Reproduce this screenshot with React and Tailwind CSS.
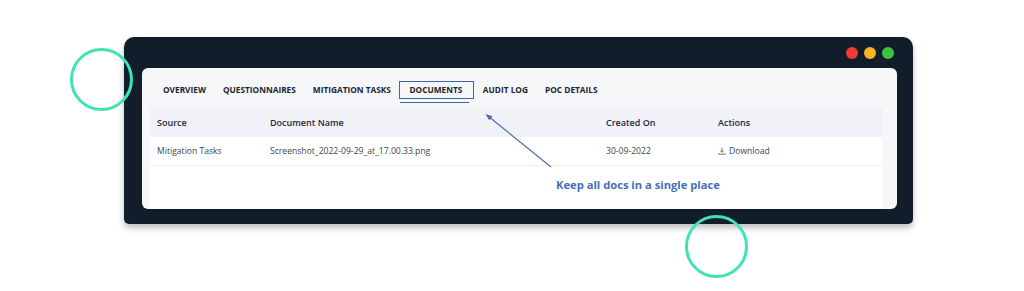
import React from "react";

const tabs = ["OVERVIEW", "QUESTIONNAIRES", "MITIGATION TASKS", "DOCUMENTS", "AUDIT LOG", "POC DETAILS"];

export default function App() {
  return (
    <div className="relative w-[1024px] h-[291px] bg-white overflow-hidden" style={{ fontFamily: "'Open Sans', 'Noto Sans', sans-serif" }}>
      <div className="pt-[37px] pl-[124px]">
        <div className="w-[789px] h-[187px] bg-[#121d2b] rounded-t-[10px] rounded-b-[5px] shadow-[0_4px_6px_rgba(0,0,0,0.25)] flex flex-col">
          <div className="h-[31px] flex items-center justify-end pr-[19px] gap-[6px] pt-[1px]">
            <span className="w-[12px] h-[12px] rounded-full bg-[#ee3b36]" />
            <span className="w-[12px] h-[12px] rounded-full bg-[#f5b521]" />
            <span className="w-[12px] h-[12px] rounded-full bg-[#3cc43f]" />
          </div>
          <div className="ml-[18px] w-[755px] h-[141px] bg-[#f6f7f9] rounded-[6px] flex flex-col">
            <div className="flex pl-[12.5px] pt-[13px]">
              {tabs.map((t) => (
                <div key={t} className="flex flex-col items-stretch">
                  <div
                    className={
                      "h-[18px] flex items-center text-[8.3px] font-bold text-[#1b2433] " +
                      (t === "DOCUMENTS" ? "border-[1.5px] border-[#3f64a8] pl-[9px] pr-[11px]" : "px-[8.5px]")
                    }
                  >
                    {t}
                  </div>
                  <div className={"h-[1px] mt-[3px] ml-[1px] mr-[5px] " + (t === "DOCUMENTS" ? "bg-[#3f64a8]" : "")} />
                </div>
              ))}
            </div>
            <div className="ml-[8px] mt-[5px] w-[733px] flex-1 bg-white flex flex-col rounded-br-[4px]">
              <div className="h-[29px] bg-[#f0f2f7] flex items-center text-[9px] font-semibold text-[#1f2937]">
                <div className="w-[120px] pl-[7px]">Source</div>
                <div className="w-[336px]">Document Name</div>
                <div className="w-[112px]">Created On</div>
                <div>Actions</div>
              </div>
              <div className="h-[29px] border-b border-[#eef0f4] flex items-center text-[8.6px] text-[#3d4553]">
                <div className="w-[120px] pl-[7px]">Mitigation Tasks</div>
                <div className="w-[336px]">Screenshot_2022-09-29_at_17.00.33.png</div>
                <div className="w-[112px]">30-09-2022</div>
                <div className="flex items-center gap-[3px]">
                  <svg width="8" height="8" viewBox="0 0 10 10" fill="none" stroke="#555" strokeWidth="1">
                    <path d="M5 1v5.5M2.8 4.5L5 6.7l2.2-2.2M1 7.5v1.5h8V7.5" />
                  </svg>
                  <span>Download</span>
                </div>
              </div>
            </div>
          </div>
        </div>
      </div>

      <svg className="absolute left-[480px] top-[110px]" width="80" height="64" viewBox="0 0 80 64" fill="none">
        <line x1="71" y1="57" x2="8" y2="6" stroke="#4a6db0" strokeWidth="1.2" />
        <path d="M5.5 4 L12.5 6.2 L9.2 10.2 Z" fill="#4a6db0" />
      </svg>
      <div className="absolute left-[556px] top-[177px] text-[11.2px] font-bold text-[#4570b8] whitespace-nowrap">
        Keep all docs in a single place
      </div>

      <div className="absolute left-[70px] top-[48px] w-[63px] h-[63px] rounded-full border-[3px] border-[#40e3b3]" />
      <div className="absolute left-[685px] top-[215px] w-[63px] h-[63px] rounded-full border-[3px] border-[#40e3b3]" />
    </div>
  );
}
